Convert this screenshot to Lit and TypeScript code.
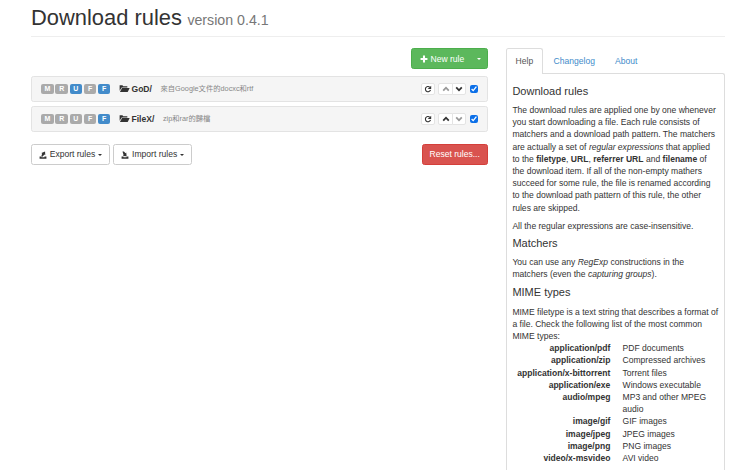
import { LitElement, html, css, svg } from "lit";
import { customElement } from "lit/decorators.js";

const icons = {
  folder: svg`<path d="M.8 3h3.6l1 1.2h5.2v1.4H3.4L.8 10z"/><path d="M3.8 6.5h9.8l-2.5 5H1.2z"/>`,
  plus: svg`<path d="M5.2 1h3.6v4.2H13v3.6H8.8V13H5.2V8.8H1V5.2h4.2z"/>`,
  exp: svg`<path d="M1 9.6h3.4v1.5h5.2V9.6H13v3.9H1z"/><path d="M4 9.2l1.5-4.4L4.2 3.6 10.6.8l.4 6.6-1.5-1.4L6 9.9z"/>`,
  imp: svg`<path d="M1 9.6h3.4v1.5h5.2V9.6H13v3.9H1z"/><path d="M2.6.8h2.6l2.7 3 1.3-1.3.6 6.6-6.6-.3 1.4-1.5z"/>`,
  redo: svg`<path fill="none" stroke="currentColor" stroke-width="1.9" d="M11.4 8.8A4.6 4.6 0 1 1 10 3.6"/><path d="M6.4 7h6.2V1.2z"/>`,
  up: svg`<path d="M7 2.6l6 6-2.2 2.2L7 7 3.2 10.8 1 8.6z"/>`,
  down: svg`<path d="M7 11.4l-6-6 2.2-2.2L7 7l3.8-3.8L13 5.4z"/>`,
};
const icon = (name: keyof typeof icons) =>
  html`<svg class="ico" viewBox="0 0 14 14" fill="currentColor" aria-hidden="true">${icons[name]}</svg>`;

const rules = [
  { name: "GoD/", desc: "來自Google文件的docxc和rtf", on: ["U", "F2"], upOff: true, downOff: false },
  { name: "FileX/", desc: "zip和rar的歸檔", on: ["F2"], upOff: false, downOff: true },
];
const mimes: [string, string][] = [
  ["application/pdf", "PDF documents"],
  ["application/zip", "Compressed archives"],
  ["application/x-bittorrent", "Torrent files"],
  ["application/exe", "Windows executable"],
  ["audio/mpeg", "MP3 and other MPEG audio"],
  ["image/gif", "GIF images"],
  ["image/jpeg", "JPEG images"],
  ["image/png", "PNG images"],
  ["video/x-msvideo", "AVI video"],
];

@customElement("app-root")
export class AppRoot extends LitElement {
  static styles = css`
    :host {
      display: block;
      height: 470px;
      overflow: hidden;
      box-sizing: border-box;
      padding: 0 15px 0 31px;
      background: #fff;
      color: #333;
      font-family: "Liberation Sans", Arial, sans-serif;
      font-size: 8.55px;
      line-height: 12.2px;
    }
    .ico { width: 8px; height: 8px; display: block; flex: none; }
    .head {
      display: flex; align-items: baseline; gap: 5.5px;
      height: 37px; box-sizing: border-box; padding-top: 5px;
      border-bottom: 1px solid #eee;
    }
    h1 { margin: 0; font-size: 21.9px; font-weight: 400; line-height: 25px; color: #333; }
    .head small { font-size: 14.2px; color: #777; line-height: 25px; }
    .cols { display: flex; gap: 18.3px; padding-top: 11.3px; }
    .left { width: 456.7px; flex: none; }
    .right { width: 219px; flex: none; }
    .top { display: flex; justify-content: flex-end; margin-bottom: 6.4px; }
    .new {
      width: 76.3px; height: 21px; box-sizing: border-box;
      display: flex; align-items: center;
      background: #5cb85c; border: 1px solid #4cae4c; border-radius: 2.5px; color: #fff;
    }
    .new .lbl { flex: 1; display: flex; align-items: center; gap: 2.6px; padding-left: 7.5px; }
    .new .arrow { width: 15px; display: flex; justify-content: center; }
    .caret { display: block; flex: none; border-top: 2.6px solid currentColor; border-left: 2.6px solid transparent; border-right: 2.6px solid transparent; }
    .rule {
      height: 26.6px; box-sizing: border-box; margin-bottom: 3.4px;
      display: flex; align-items: center;
      padding: 0 9px 0 9.3px;
      background: #f5f5f5; border: 1px solid #e3e3e3; border-radius: 2.5px;
    }
    .badges { display: flex; gap: 1.8px; width: 77.6px; flex: none; }
    .b {
      width: 12.4px; height: 10.4px; border-radius: 2px;
      background: #aaa; color: #fff; font-size: 7px; font-weight: 700; line-height: 10.4px; text-align: center;
    }
    .b.on { background: #428bca; }
    .name { display: flex; align-items: center; gap: 1.6px; font-weight: 700; color: #333; margin-right: 8.6px; }
    .name .ico { width: 11px; height: 11px; }
    .desc { flex: 1; color: #888; font-size: 7.3px; font-family: "Liberation Sans", "Noto Sans CJK TC", sans-serif; }
    .ctl { display: flex; align-items: center; }
    .ib {
      width: 14.6px; height: 12.6px; box-sizing: border-box;
      display: flex; align-items: center; justify-content: center;
      background: #fff; border: 1px solid #e4e4e4; border-radius: 2px; color: #333;
    }
    .ib.off { color: #999; }
    .ib.redo { margin-right: 3px; }
    .ib.l { border-radius: 2px 0 0 2px; }
    .ib.r { border-radius: 0 2px 2px 0; margin-left: -1px; }
    input { width: 8px; height: 8px; margin: 0 0 0 3.3px; accent-color: #0b6fe8; }
    .bottom { display: flex; align-items: center; padding-top: 8.6px; gap: 3.4px; }
    .btn {
      height: 20.6px; box-sizing: border-box;
      display: flex; align-items: center; gap: 2.7px;
      padding: 0 7px;
      background: #fff; border: 1px solid #ccc; border-radius: 2.5px; color: #333;
    }
    .reset {
      margin-left: auto; width: 66px; height: 20.6px; box-sizing: border-box;
      display: flex; align-items: center; justify-content: center;
      background: #d9534f; border: 1px solid #d43f3a; border-radius: 2.5px; color: #fff;
    }
    .tabs { display: flex; height: 25px; box-sizing: border-box; position: relative; z-index: 1; }
    .tab { padding: 6.8px 9.3px 0; color: #428bca; }
    .tab.active {
      color: #555; background: #fff; border: 1px solid #ddd; border-bottom: 0;
      border-radius: 2.5px 2.5px 0 0; height: 26px; box-sizing: border-box; padding: 6px 8.6px 0;
    }
    .tab + .tab { margin-left: 1.5px; }
    .panel {
      height: 400px; box-sizing: border-box;
      padding: 10.5px 5.4px 0;
      border: 1px solid #ddd; border-bottom: 0; border-radius: 0 2.5px 0 0;
    }
    h4 { margin: 0 0 7px; font-size: 11px; font-weight: 400; line-height: 12.1px; color: #333; }
    p { margin: 0 0 6px; }
    p.short { margin-bottom: 5px; }
    p.tight { margin: 0; }
    dl { margin: 0; display: grid; grid-template-columns: 98px 1fr; column-gap: 12.2px; }
    dt { text-align: right; font-weight: 700; }
    dd { margin: 0; }
  `;

  render() {
    return html`
      <div class="head"><h1>Download rules</h1><small>version 0.4.1</small></div>
      <div class="cols">
        <div class="left">
          <div class="top">
            <div class="new">
              <span class="lbl">${icon("plus")}New rule</span>
              <span class="arrow"><i class="caret"></i></span>
            </div>
          </div>
          ${rules.map(
            (r) => html`
              <div class="rule">
                <div class="badges">
                  ${[["M", "M"], ["R", "R"], ["U", "U"], ["F", "F1"], ["F", "F2"]].map(
                    ([t, k]) => html`<span class="b ${r.on.includes(k) ? "on" : ""}">${t}</span>`
                  )}
                </div>
                <span class="name">${icon("folder")}${r.name}</span>
                <span class="desc">${r.desc}</span>
                <div class="ctl">
                  <span class="ib redo">${icon("redo")}</span>
                  <span class="ib l ${r.upOff ? "off" : ""}">${icon("up")}</span>
                  <span class="ib r ${r.downOff ? "off" : ""}">${icon("down")}</span>
                  <input type="checkbox" checked />
                </div>
              </div>
            `
          )}
          <div class="bottom">
            <span class="btn">${icon("exp")}Export rules<i class="caret"></i></span>
            <span class="btn">${icon("imp")}Import rules<i class="caret"></i></span>
            <span class="reset">Reset rules...</span>
          </div>
        </div>
        <div class="right">
          <div class="tabs">
            <span class="tab active">Help</span>
            <span class="tab">Changelog</span>
            <span class="tab">About</span>
          </div>
          <div class="panel">
            <h4>Download rules</h4>
            <p>
              The download rules are applied one by one whenever you start downloading a file. Each rule
              consists of matchers and a download path pattern. The matchers are actually a set of
              <em>regular expressions</em> that applied to the <b>filetype</b>, <b>URL</b>,
              <b>referrer URL</b> and <b>filename</b> of the download item. If all of the non-empty mathers
              succeed for some rule, the file is renamed according to the download path pattern of this rule,
              the other rules are skipped.
            </p>
            <p class="short">All the regular expressions are case-insensitive.</p>
            <h4>Matchers</h4>
            <p>You can use any <em>RegExp</em> constructions in the matchers (even the <em>capturing groups</em>).</p>
            <h4>MIME types</h4>
            <p class="tight">MIME filetype is a text string that describes a format of a file. Check the following list of the most common MIME types:</p>
            <dl>
              ${mimes.map(([a, b]) => html`<dt>${a}</dt><dd>${b}</dd>`)}
            </dl>
          </div>
        </div>
      </div>
    `;
  }
}
